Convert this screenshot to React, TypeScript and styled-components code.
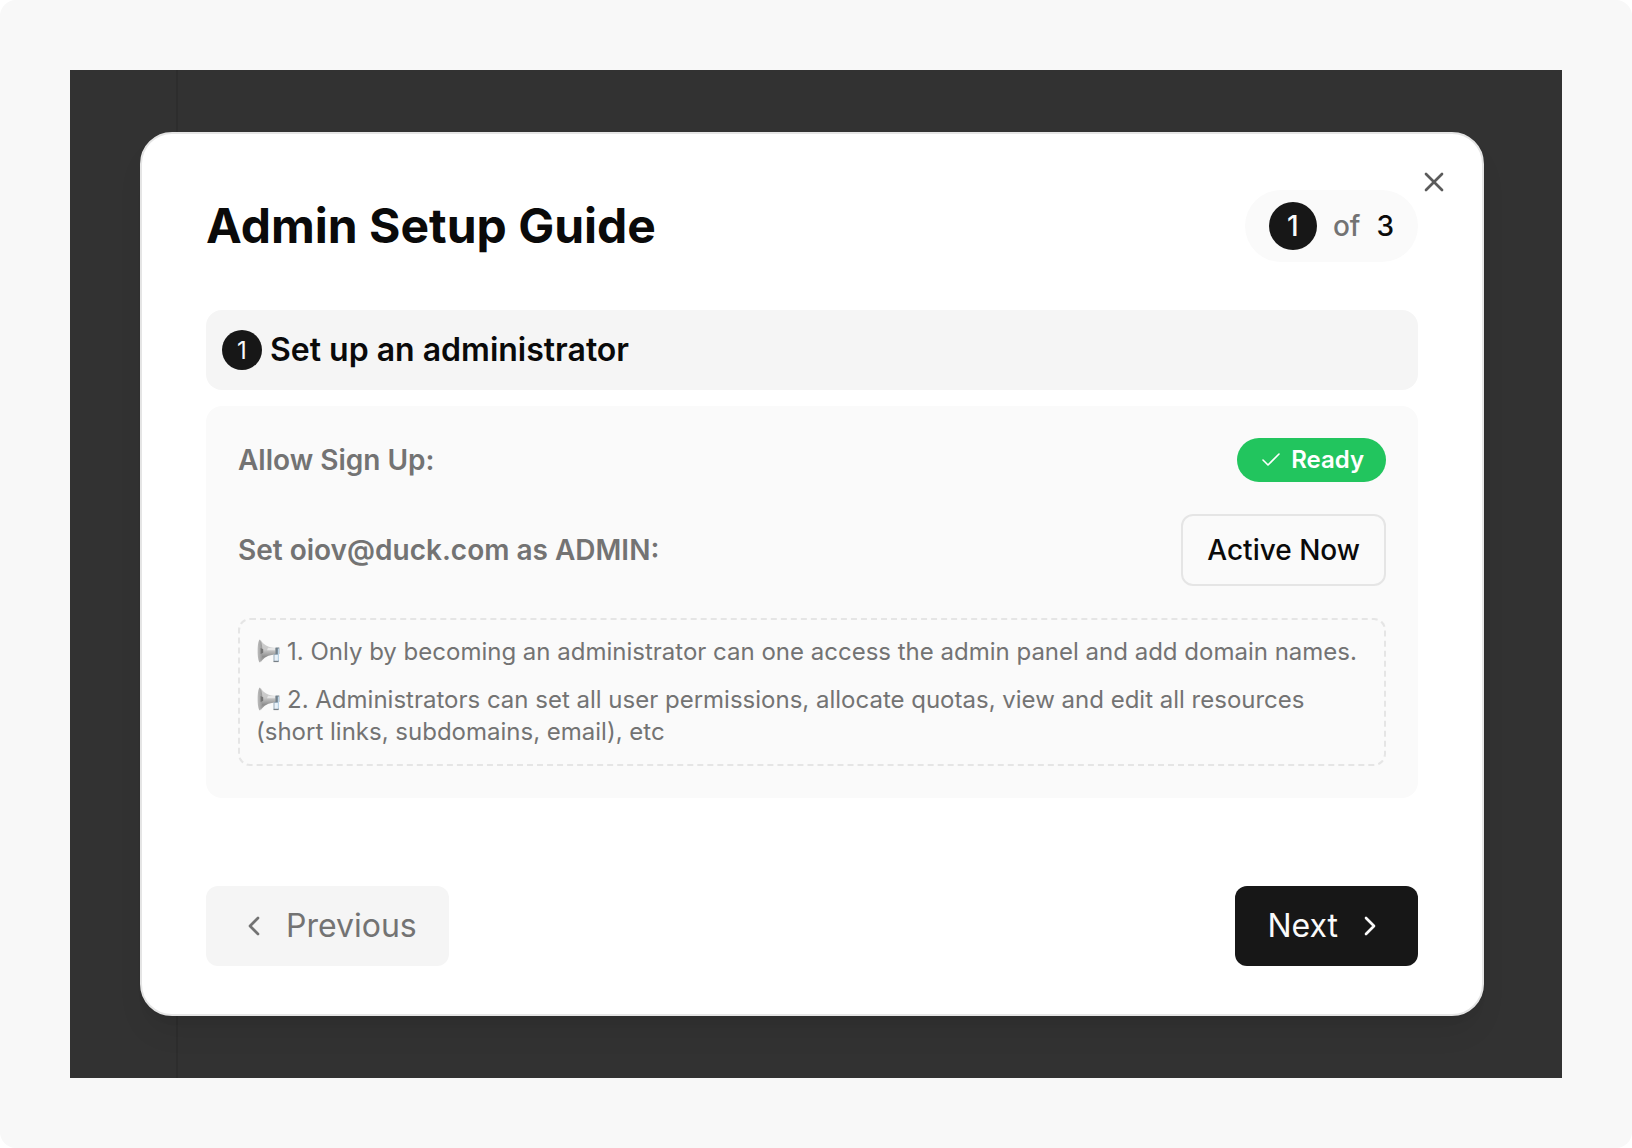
import React from "react";
import styled, { createGlobalStyle } from "styled-components";
import { Check, ChevronLeft, ChevronRight, X } from "lucide-react";

const color = {
  page: "#f8f8f8",
  overlay: "#323232",
  overlayLine: "#2d2d2d",
  surface: "#ffffff",
  ink: "#0a0a0a",
  primary: "#171717",
  onPrimary: "#fafafa",
  muted: "#f5f5f5",
  subtle: "#fafafa",
  mutedText: "#737373",
  border: "#e5e5e5",
  success: "#22c55e",
};

const GlobalStyle = createGlobalStyle`
  *, *::before, *::after { box-sizing: border-box; }
  body {
    margin: 0;
    background: #ffffff;
    color: ${color.ink};
    font-family: Inter, "Liberation Sans", sans-serif;
    -webkit-font-smoothing: antialiased;
  }
  h1, h2, p { margin: 0; padding: 0; }
  button { font: inherit; cursor: pointer; }
`;

const Page = styled.div`
  display: grid;
  min-height: 100vh;
  padding: 70px;
  border-radius: 16px;
  background: ${color.page};
`;

const Stage = styled.div`
  display: grid;
  grid-template: 1fr / 1fr;
  background: ${color.overlay};
`;

const Backdrop = styled.div`
  grid-area: 1 / 1;
  display: grid;
  grid-template-columns: 108px 1fr;
`;

const SideRail = styled.div`
  border-right: 2px solid ${color.overlayLine};
`;

const Dialog = styled.section`
  grid-area: 1 / 1;
  position: relative;
  align-self: center;
  margin: 62px 78px 62px 70px;
  padding: 56px 64px 48px;
  border: 2px solid ${color.border};
  border-radius: 32px;
  background: ${color.surface};
  box-shadow: 0 20px 30px -6px rgba(0, 0, 0, 0.08), 0 8px 12px -8px rgba(0, 0, 0, 0.08);
`;

const CloseButton = styled.button`
  position: absolute;
  top: 32px;
  right: 32px;
  display: flex;
  padding: 0;
  border: 0;
  background: none;
  color: ${color.primary};
  opacity: 0.7;
`;

const Header = styled.header`
  display: flex;
  align-items: center;
  justify-content: space-between;
  margin-bottom: 48px;
`;

const Title = styled.h1`
  font-size: 48px;
  font-weight: 700;
  line-height: 64px;
`;

const Progress = styled.p`
  display: flex;
  align-items: center;
  gap: 16px;
  padding: 12px 24px;
  border-radius: 36px;
  background: ${color.subtle};
  font-size: 28px;
  font-weight: 500;
  line-height: 40px;
`;

const ProgressWord = styled.span`
  color: ${color.mutedText};
`;

const NumberDisc = styled.span<{ $size: number; $text: number }>`
  display: inline-flex;
  flex: none;
  align-items: center;
  justify-content: center;
  width: ${(p) => p.$size}px;
  height: ${(p) => p.$size}px;
  border-radius: 50%;
  background: ${color.primary};
  color: ${color.onPrimary};
  font-size: ${(p) => p.$text}px;
`;

const StepHeading = styled.div`
  display: flex;
  align-items: center;
  gap: 8px;
  margin-bottom: 16px;
  padding: 16px;
  border-radius: 16px;
  background: ${color.muted};
`;

const StepTitle = styled.h2`
  font-size: 32px;
  font-weight: 600;
  line-height: 48px;
`;

const Panel = styled.div`
  display: grid;
  gap: 32px;
  padding: 32px;
  border-radius: 16px;
  background: ${color.subtle};
`;

const Setting = styled.div`
  display: flex;
  align-items: center;
  justify-content: space-between;
`;

const SettingLabel = styled.span`
  color: ${color.mutedText};
  font-size: 28px;
  font-weight: 600;
  line-height: 40px;
`;

const Badge = styled.span`
  display: inline-flex;
  align-items: center;
  gap: 8px;
  padding: 6px 22px;
  border-radius: 22px;
  background: ${color.success};
  color: #ffffff;
  font-size: 24px;
  font-weight: 600;
  line-height: 32px;
`;

const OutlineButton = styled.button`
  padding: 14px 24px;
  border: 2px solid ${color.border};
  border-radius: 12px;
  background: transparent;
  color: ${color.ink};
  font-size: 28px;
  font-weight: 500;
  line-height: 40px;
`;

const Notes = styled.div`
  display: grid;
  gap: 16px;
  padding: 16px;
  border: 2px dashed ${color.border};
  border-radius: 12px;
  color: ${color.mutedText};
  font-size: 24px;
  line-height: 32px;
`;

const Footer = styled.footer`
  display: flex;
  justify-content: space-between;
  margin-top: 88px;
`;

const NavButton = styled.button<{ $primary?: boolean }>`
  display: flex;
  align-items: center;
  gap: 16px;
  padding: 16px 32px;
  border: 0;
  border-radius: 12px;
  background: ${(p) => (p.$primary ? color.primary : color.muted)};
  color: ${(p) => (p.$primary ? color.onPrimary : color.mutedText)};
  font-size: 32px;
  line-height: 48px;
`;

const HornSvg = styled.svg`
  width: 25px;
  height: 24px;
  margin-right: 6px;
  vertical-align: -3px;
`;

function Horn() {
  return (
    <HornSvg viewBox="-1 0 25 24" aria-hidden="true">
      <defs>
        <linearGradient id="bell" x1="0" y1="0" x2="0" y2="1">
          <stop offset="0" stopColor="#cfcfcf" />
          <stop offset="0.45" stopColor="#c8c8c8" />
          <stop offset="0.75" stopColor="#8d8d8d" />
          <stop offset="1" stopColor="#b5b5b5" />
        </linearGradient>
        <linearGradient id="mouth" x1="0" y1="0" x2="1" y2="0">
          <stop offset="0" stopColor="#bdbdbd" />
          <stop offset="1" stopColor="#979797" />
        </linearGradient>
      </defs>
      <path d="M3.5 0.5C6 5.5 11 8.6 19 9V15.5C11 15.8 7 18.5 3.5 23.5Z" fill="url(#bell)" />
      <path d="M11 8.8H18V11.2H10Z" fill="#e6e6e6" />
      <path d="M2.6 0.5C4.4 2 5.4 6.5 5.4 12S4.4 22 2.6 23.5C1.2 22 0.6 17 0.6 12S1.2 2 2.6 0.5Z" fill="url(#mouth)" />
      <path d="M3.6 9L6.2 10.2V13.8L3.6 15Z" fill="#747474" />
      <path d="M18.5 8.5H22.3V15H18.5Z" fill="#72808b" />
      <path d="M17 15.5H21.5V22.3H17Z" fill="#e9f1f8" stroke="#9badbb" strokeWidth="1" />
      <path d="M21.4 9.5V21.5" stroke="#b8d2e6" strokeWidth="1.2" />
      <path d="M16.5 22.5H21.5" stroke="#777f85" strokeWidth="1.2" />
    </HornSvg>
  );
}

const notes = [
  "1. Only by becoming an administrator can one access the admin panel and add domain names.",
  "2. Administrators can set all user permissions, allocate quotas, view and edit all resources (short links, subdomains, email), etc",
];

export default function App() {
  return (
    <>
      <GlobalStyle />
      <Page>
        <Stage>
          <Backdrop>
            <SideRail />
          </Backdrop>
          <Dialog role="dialog" aria-labelledby="guide-title">
            <CloseButton type="button" aria-label="Close">
              <X size={32} />
            </CloseButton>
            <Header>
              <Title id="guide-title">Admin Setup Guide</Title>
              <Progress>
                <NumberDisc $size={48} $text={28}>1</NumberDisc>
                <ProgressWord>of</ProgressWord>
                <span>3</span>
              </Progress>
            </Header>
            <StepHeading>
              <NumberDisc $size={40} $text={24}>1</NumberDisc>
              <StepTitle>Set up an administrator</StepTitle>
            </StepHeading>
            <Panel>
              <Setting>
                <SettingLabel>Allow Sign Up:</SettingLabel>
                <Badge>
                  <Check size={24} strokeWidth={1.6} />
                  Ready
                </Badge>
              </Setting>
              <Setting>
                <SettingLabel>Set oiov@duck.com as ADMIN:</SettingLabel>
                <OutlineButton type="button">Active Now</OutlineButton>
              </Setting>
              <Notes>
                {notes.map((note) => (
                  <p key={note}>
                    <Horn />
                    {note}
                  </p>
                ))}
              </Notes>
            </Panel>
            <Footer>
              <NavButton type="button">
                <ChevronLeft size={32} />
                Previous
              </NavButton>
              <NavButton type="button" $primary>
                Next
                <ChevronRight size={32} />
              </NavButton>
            </Footer>
          </Dialog>
        </Stage>
      </Page>
    </>
  );
}
